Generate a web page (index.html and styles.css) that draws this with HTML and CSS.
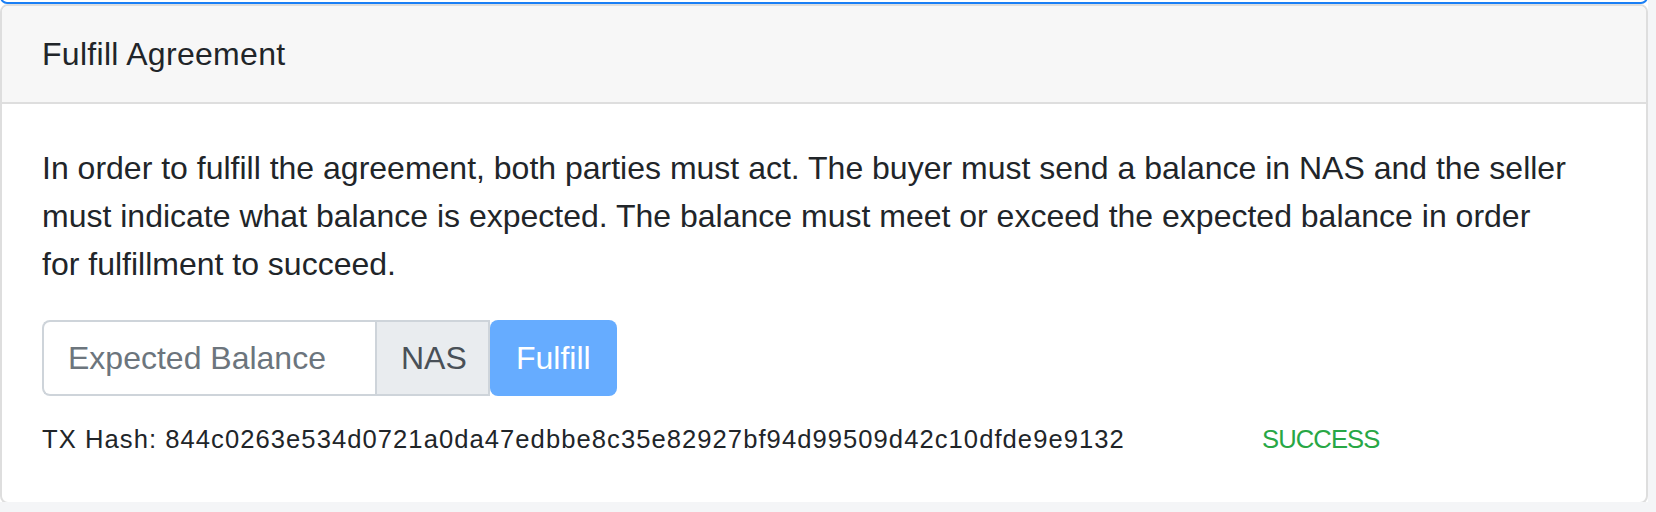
FILE: index.html
```html
<!DOCTYPE html>
<html lang="en">
<head>
<meta charset="utf-8">
<title>Fulfill Agreement</title>
<link rel="stylesheet" href="styles.css">
</head>
<body>
<div class="page">
  <div class="prev-card"></div>
  <div class="card">
    <div class="card-header">Fulfill Agreement</div>
    <div class="card-body">
      <p class="card-text">In order to fulfill the agreement, both parties must act. The buyer must send a balance in NAS and the seller must indicate what balance is expected. The balance must meet or exceed the expected balance in order<br>for fulfillment to succeed.</p>
      <div class="input-group">
        <input class="form-control" type="text" placeholder="Expected Balance">
        <span class="addon">NAS</span>
        <button class="btn" type="button" disabled>Fulfill</button>
      </div>
      <div class="row">
        <div class="col-9 hash">TX Hash: 844c0263e534d0721a0da47edbbe8c35e82927bf94d99509d42c10dfde9e9132</div>
        <div class="col-3 status">SUCCESS</div>
      </div>
    </div>
  </div>
  <div class="next-card"></div>
</div>
</body>
</html>
```

FILE: styles.css
```css
* { box-sizing: border-box; }

html, body {
  margin: 0;
  padding: 0;
}

body {
  background: #f4f5f7;
  font-family: "Liberation Sans", Arial, sans-serif;
  color: #212529;
  font-size: 32px;
  line-height: 48px;
  overflow: hidden;
}

.page {
  width: 1648px;
  height: 512px;
  background: #ffffff;
}

.prev-card {
  height: 14px;
  margin-top: -10px;
  border: 2px solid #1a7ff5;
  border-radius: 8px;
}

.card {
  border: 2px solid #dedede;
  border-radius: 8px;
  overflow: hidden;
}

.card-header {
  background: #f7f7f7;
  padding: 24px 40px;
  border-bottom: 2px solid #dedede;
  letter-spacing: 0.3px;
}

.card-body {
  padding: 40px 40px 44px;
}

.card-text {
  margin: 0 0 32px;
}

.input-group {
  display: flex;
  height: 76px;
}

.form-control {
  width: 333px;
  height: 76px;
  padding: 0 24px;
  border: 2px solid #ced4da;
  border-right: 0;
  border-radius: 8px 0 0 8px;
  font: inherit;
  color: #495057;
  background: #fff;
  outline: none;
}

.form-control::placeholder {
  color: #6c757d;
  opacity: 1;
}

.addon {
  display: flex;
  align-items: center;
  width: 115px;
  padding: 0 24px;
  background: #e9ecef;
  border: 2px solid #ced4da;
  color: #495057;
}

.btn {
  width: 127px;
  height: 76px;
  padding: 0 24px;
  border: 2px solid transparent;
  border-radius: 8px;
  background: #66acff;
  color: #ffffff;
  font: inherit;
  text-align: left;
}

.row {
  display: flex;
  margin: 24px -30px 0;
  font-size: 25.6px;
  line-height: 38px;
}

.col-9 {
  flex: 0 0 75%;
  padding: 0 30px;
  white-space: nowrap;
}

.col-3 {
  flex: 0 0 25%;
  padding: 0 30px;
}

.hash {
  letter-spacing: 1.05px;
}

.status {
  color: #28a745;
  letter-spacing: -0.9px;
  padding-left: 32px;
}

.next-card {
  height: 20px;
  margin-top: 2px;
  border: 2px solid #dedede;
  border-radius: 8px;
  background: #e2e2e2;
}
```
